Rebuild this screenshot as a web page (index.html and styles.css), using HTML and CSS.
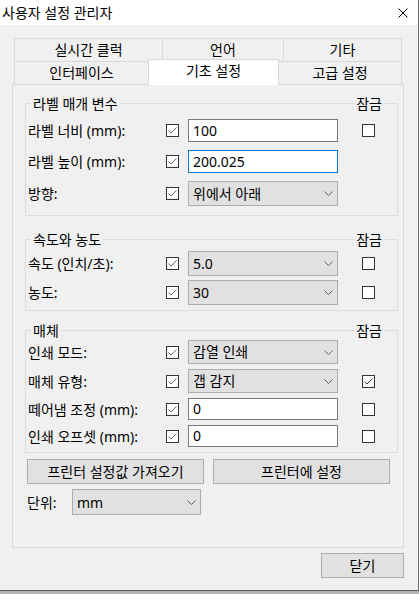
FILE: index.html
```html
<!DOCTYPE html>
<html lang="ko">
<head>
<meta charset="utf-8">
<title>사용자 설정 관리자</title>
<link rel="stylesheet" href="styles.css">
</head>
<body>
<div class="window">
  <div class="titlebar">
    <span class="title">사용자 설정 관리자</span>
    <svg class="close" width="10" height="10" viewBox="0 0 10 10"><path d="M0.5 0.5L9.5 9.5M9.5 0.5L0.5 9.5" stroke="#000" stroke-width="1" fill="none"/></svg>
  </div>
  <div class="client">
    <div class="tabs">
      <div class="tabrow">
        <div class="tab t1">실시간 클럭</div>
        <div class="tab t2">언어</div>
        <div class="tab t3 last">기타</div>
      </div>
      <div class="tabrow">
        <div class="tab t4">인터페이스</div>
        <div class="tab t5 sel">기초 설정</div>
        <div class="tab t6 last nol">고급 설정</div>
      </div>
      <div class="panel">
        <div class="group g1">
          <div class="ghead"><span class="gtitle">라벨 매개 변수</span><span class="glock">잠금</span></div>
          <div class="grows">
            <span class="lbl">라벨 너비 (mm):</span>
            <span class="cb"><svg viewBox="0 0 11 11"><polyline points="1.5,5.5 4,8 9.5,2.5" class="ck"/></svg></span>
            <div class="tb">100</div>
            <span class="cb lock"></span>

            <span class="lbl">라벨 높이 (mm):</span>
            <span class="cb"><svg viewBox="0 0 11 11"><polyline points="1.5,5.5 4,8 9.5,2.5" class="ck"/></svg></span>
            <div class="tb focus">200.025</div>
            <span></span>

            <span class="lbl">방향:</span>
            <span class="cb"><svg viewBox="0 0 11 11"><polyline points="1.5,5.5 4,8 9.5,2.5" class="ck"/></svg></span>
            <div class="combo"><span>위에서 아래</span><svg class="chev" width="9" height="5" viewBox="0 0 9 5"><path d="M0.5 0.5L4.5 4.5L8.5 0.5"/></svg></div>
            <span></span>
          </div>
        </div>

        <div class="group g2">
          <div class="ghead"><span class="gtitle">속도와 농도</span><span class="glock">잠금</span></div>
          <div class="grows">
            <span class="lbl">속도 (인치/초):</span>
            <span class="cb"><svg viewBox="0 0 11 11"><polyline points="1.5,5.5 4,8 9.5,2.5" class="ck"/></svg></span>
            <div class="combo"><span>5.0</span><svg class="chev" width="9" height="5" viewBox="0 0 9 5"><path d="M0.5 0.5L4.5 4.5L8.5 0.5"/></svg></div>
            <span class="cb lock"></span>

            <span class="lbl">농도:</span>
            <span class="cb"><svg viewBox="0 0 11 11"><polyline points="1.5,5.5 4,8 9.5,2.5" class="ck"/></svg></span>
            <div class="combo"><span>30</span><svg class="chev" width="9" height="5" viewBox="0 0 9 5"><path d="M0.5 0.5L4.5 4.5L8.5 0.5"/></svg></div>
            <span class="cb lock"></span>
          </div>
        </div>

        <div class="group g3">
          <div class="ghead"><span class="gtitle">매체</span><span class="glock">잠금</span></div>
          <div class="grows">
            <span class="lbl">인쇄 모드:</span>
            <span class="cb"><svg viewBox="0 0 11 11"><polyline points="1.5,5.5 4,8 9.5,2.5" class="ck"/></svg></span>
            <div class="combo"><span>감열 인쇄</span><svg class="chev" width="9" height="5" viewBox="0 0 9 5"><path d="M0.5 0.5L4.5 4.5L8.5 0.5"/></svg></div>
            <span></span>

            <span class="lbl">매체 유형:</span>
            <span class="cb"><svg viewBox="0 0 11 11"><polyline points="1.5,5.5 4,8 9.5,2.5" class="ck"/></svg></span>
            <div class="combo"><span>갭 감지</span><svg class="chev" width="9" height="5" viewBox="0 0 9 5"><path d="M0.5 0.5L4.5 4.5L8.5 0.5"/></svg></div>
            <span class="cb lock"><svg viewBox="0 0 11 11"><polyline points="1.5,5.5 4,8 9.5,2.5" class="ck dark"/></svg></span>

            <span class="lbl">떼어냄 조정 (mm):</span>
            <span class="cb"><svg viewBox="0 0 11 11"><polyline points="1.5,5.5 4,8 9.5,2.5" class="ck"/></svg></span>
            <div class="tb">0</div>
            <span class="cb lock"></span>

            <span class="lbl">인쇄 오프셋 (mm):</span>
            <span class="cb"><svg viewBox="0 0 11 11"><polyline points="1.5,5.5 4,8 9.5,2.5" class="ck"/></svg></span>
            <div class="tb">0</div>
            <span class="cb lock"></span>
          </div>
        </div>

        <div class="btnrow">
          <button class="btn wide">프린터 설정값 가져오기</button>
          <button class="btn wide">프린터에 설정</button>
        </div>

        <div class="unitrow">
          <span class="unitlbl">단위:</span>
          <div class="combo unit"><span>mm</span><svg class="chev" width="9" height="5" viewBox="0 0 9 5"><path d="M0.5 0.5L4.5 4.5L8.5 0.5"/></svg></div>
        </div>
      </div>
    </div>
    <div class="footer">
      <button class="btn closebtn">닫기</button>
    </div>
  </div>
</div>
</body>
</html>
```

FILE: styles.css
```css
html, body {
  margin: 0;
  padding: 0;
}

body {
  width: 419px;
  height: 594px;
  overflow: hidden;
  background: #b4b4b4;
  font-family: "Noto Sans", "Noto Sans CJK KR", sans-serif;
  font-size: 14px;
  color: #000;
}

.window {
  width: 419px;
  height: 591px;
  box-sizing: border-box;
  border-right: 1px solid #6e6e6e;
  border-bottom: 1px solid #5a5a5a;
  background: #f0f0f0;
  display: flex;
  flex-direction: column;
}

.titlebar {
  height: 25px;
  flex: none;
  background: #fff;
  display: flex;
  align-items: center;
  justify-content: space-between;
  padding: 0 10px 0 2px;
  line-height: 25px;
}

.close {
  display: block;
}

.client {
  flex: 1;
  display: flex;
  flex-direction: column;
}

.tabs {
  margin: 13px 0 0 12px;
  width: 392px;
}

.tabrow {
  display: flex;
  align-items: flex-start;
  margin-left: 2px;
  height: 23px;
}

.tab {
  box-sizing: border-box;
  height: 23px;
  border-top: 1px solid #d9d9d9;
  border-left: 1px solid #d9d9d9;
  background: #f0f0f0;
  text-align: center;
  line-height: 22px;
  white-space: nowrap;
}

.tab.last {
  border-right: 1px solid #d9d9d9;
}

.tab.nol {
  border-left: none;
}

.t1 { width: 148px; }
.t2 { width: 121px; }
.t3 { width: 119px; }
.t4 { width: 134px; }
.t5 { width: 131px; }
.t6 { width: 123px; }

.tab.sel {
  background: #fff;
  height: 26px;
  margin-top: -2px;
  border-right: 1px solid #d9d9d9;
  line-height: 21px;
  position: relative;
  z-index: 1;
}

.panel {
  box-sizing: border-box;
  height: 464px;
  border: 1px solid #d9d9d9;
  background: #f0f0f0;
  padding-left: 12px;
  display: flex;
  flex-direction: column;
}

.group {
  box-sizing: border-box;
  width: 373px;
  border: 1px solid #dcdcdc;
}

.g1 { margin-top: 18px; }
.g2 { margin-top: 23px; }
.g3 { margin-top: 19px; }

.ghead {
  display: flex;
  justify-content: space-between;
  margin-top: -10px;
  height: 19px;
  line-height: 19px;
}

.ghead span {
  background: #f0f0f0;
  padding: 0 2px;
  white-space: nowrap;
}

.gtitle {
  margin-left: 5px;
}

.glock {
  margin-right: 13px;
}

.grows {
  display: grid;
  grid-template-columns: 138px 22px 150px 37px;
  align-items: center;
  padding-left: 2px;
}

.g1 .grows {
  padding-top: 6px;
  padding-bottom: 9px;
  row-gap: 8px;
}

.g2 .grows {
  padding-top: 2px;
  padding-bottom: 5px;
  row-gap: 4px;
}

.g3 .grows {
  padding-top: 0;
  padding-bottom: 5px;
  row-gap: 5px;
}

.lbl {
  line-height: 19px;
  white-space: nowrap;
}

.cb {
  display: block;
  width: 13px;
  height: 13px;
  box-sizing: border-box;
  border: 1px solid #333;
  background: #fff;
}

.cb svg {
  display: block;
  width: 11px;
  height: 11px;
}

.ck {
  fill: none;
  stroke: #6d6d6d;
  stroke-width: 1;
}

.ck.dark {
  stroke: #333;
}

.cb.lock {
  justify-self: end;
}

.tb {
  box-sizing: border-box;
  height: 23px;
  border: 1px solid #7a7a7a;
  background: #fff;
  padding-left: 4px;
  line-height: 21px;
  white-space: nowrap;
}

.tb.focus {
  border-color: #0078d7;
}

.g3 .tb {
  height: 22px;
  line-height: 20px;
}

.combo {
  box-sizing: border-box;
  height: 25px;
  border: 1px solid #adadad;
  background: #e1e1e1;
  display: flex;
  align-items: center;
  justify-content: space-between;
  padding: 0 4px;
  line-height: 23px;
  white-space: nowrap;
}

.g3 .combo {
  height: 24px;
  line-height: 22px;
}

.chev {
  display: block;
  flex: none;
}

.chev path {
  fill: none;
  stroke: #606060;
  stroke-width: 1;
}

.btnrow {
  display: flex;
  gap: 9px;
  margin: 6px 0 0 2px;
}

.btn {
  box-sizing: border-box;
  height: 25px;
  border: 1px solid #adadad;
  background: #e1e1e1;
  font: inherit;
  color: #000;
  line-height: 23px;
  text-align: center;
  padding: 0;
  white-space: nowrap;
}

.btn.wide {
  width: 177px;
}

.unitrow {
  display: flex;
  align-items: center;
  margin: 5px 0 0 2px;
}

.unitlbl {
  width: 45px;
  line-height: 19px;
}

.combo.unit {
  width: 129px;
  height: 26px;
}

.footer {
  display: flex;
  justify-content: flex-end;
  padding: 5px 14px 0 0;
}

.closebtn {
  width: 83px;
}
```
